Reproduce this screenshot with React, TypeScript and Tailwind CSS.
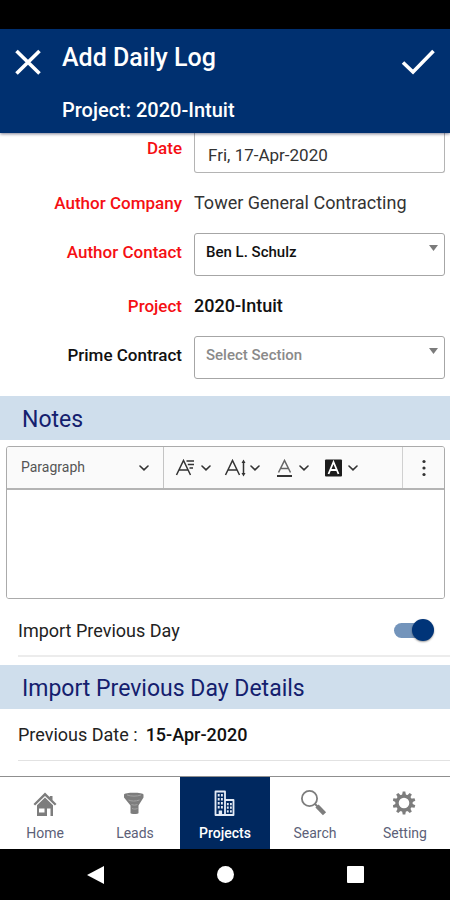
import { useState } from "react";
import type { ReactNode } from "react";

const FIELD =
    "block h-[43px] w-full appearance-none rounded-[3px] border border-[#a6a6a6] bg-white pl-[11px] pr-8 pb-1 text-[15px] outline-none";

function Row({
    label,
    htmlFor,
    required,
    labelClass = "",
    children,
}: {
    label: string;
    htmlFor?: string;
    required?: boolean;
    labelClass?: string;
    children: ReactNode;
}) {
    const color = required ? "text-[#f50f14]" : "text-[#111]";
    return (
        <div className="grid grid-cols-[182px_1fr] items-center gap-3 pr-[5px]">
            <label
                htmlFor={htmlFor}
                className={`text-right text-[17px] leading-7 font-medium ${color} ${labelClass}`}
            >
                {label}
            </label>
            {children}
        </div>
    );
}

function SelectBox({
    id,
    className,
    options,
}: {
    id: string;
    className: string;
    options: string[];
}) {
    return (
        <div className="relative">
            <select id={id} className={`${FIELD} ${className}`}>
                {options.map((o) => (
                    <option key={o}>{o}</option>
                ))}
            </select>
            <svg
                className="pointer-events-none absolute right-[7px] top-3 h-[6px] w-[9px]"
                viewBox="0 0 9 6"
            >
                <path d="M0 0h9L4.500 6z" fill="#7b7b7b" />
            </svg>
        </div>
    );
}

function SectionTitle({ children }: { children: ReactNode }) {
    return (
        <h2 className="flex h-11 items-center bg-[#cfdeec] pt-1 pl-[22px] text-[23px] text-[#14206e]">
            {children}
        </h2>
    );
}

function Chevron() {
    return (
        <svg width="10" height="6" viewBox="0 0 10 6" fill="none">
            <path
                d="M1 1l4 3.800L9 1"
                stroke="#333"
                strokeWidth="1.600"
                strokeLinecap="round"
            />
        </svg>
    );
}

const LETTER_A = "M1.500 17L8.500 2.500L15.500 17M4.200 12H12.800";

function ToolButton({ label, children }: { label: string; children: ReactNode }) {
    return (
        <button aria-label={label} className="flex items-center gap-[3px]">
            <svg
                width="23"
                height="20"
                viewBox="0 0 23 20"
                fill="none"
                stroke="#333"
                strokeWidth="1.500"
            >
                {children}
            </svg>
            <Chevron />
        </button>
    );
}

function Editor() {
    return (
        <div className="mt-[6px] mr-[5px] ml-[6px] overflow-hidden rounded-[3px] border border-[#ababab]">
            <div className="flex h-[43px] items-stretch border-b-2 border-[#b4b4b4] bg-[#fafafa]">
                <button className="flex w-[157px] items-center justify-between border-r border-[#c4c4c4] pl-[14px] pr-[14px] text-[14px] text-[#555]">
                    Paragraph
                    <Chevron />
                </button>
                <div className="flex flex-1 items-center gap-[13px] pl-[11px]">
                    <ToolButton label="Font family">
                        <path d={LETTER_A} />
                        <path d="M11.500 3H19M12.800 6.500H19M14.500 10H18" />
                    </ToolButton>
                    <ToolButton label="Font size">
                        <path d={LETTER_A} />
                        <path d="M19.500 4V16" />
                        <path
                            d="M19.500 1.500l2 3.500h-4zM19.500 18.500l2-3.500h-4z"
                            fill="#333"
                            stroke="none"
                        />
                    </ToolButton>
                    <ToolButton label="Text color">
                        <path
                            d="M5.500 14.500L11.500 2.500L17.500 14.500M7.700 10.500H15.300"
                            stroke="#666"
                        />
                        <path d="M4 18H19" strokeWidth="2" />
                    </ToolButton>
                    <ToolButton label="Background color">
                        <rect
                            x="3"
                            y="1.500"
                            width="17"
                            height="17"
                            rx="1"
                            fill="#1c1c1c"
                            stroke="none"
                        />
                        <path
                            d="M6.500 16L11.500 4L16.500 16M8.200 12H14.800"
                            stroke="#fff"
                            strokeWidth="1.800"
                        />
                    </ToolButton>
                </div>
                <button
                    aria-label="More"
                    className="flex w-[42px] items-center justify-center border-l border-[#d0d0d0]"
                >
                    <svg width="4" height="18" viewBox="0 0 4 18" fill="#333">
                        <circle cx="2" cy="2.500" r="1.600" />
                        <circle cx="2" cy="9" r="1.600" />
                        <circle cx="2" cy="15.500" r="1.600" />
                    </svg>
                </button>
            </div>
            <textarea
                aria-label="Notes"
                className="block h-[108px] w-full resize-none bg-white p-3 outline-none"
            />
        </div>
    );
}

function HomeIcon() {
    return (
        <svg width="24" height="28" viewBox="0 0 24 28" fill="#7d7d7d">
            <path d="M12 2.500L.5 14l1.600 1.600L12 6l9.900 9.600 1.600-1.600-4-4V6h-2.700v1.300z" />
            <path
                d="M12 7.500L4 15.300V26h16V15.300zM6 18.500h5.500v4H6zM14 18.500h3.500V26H14z"
                fillRule="evenodd"
            />
        </svg>
    );
}

function LeadsIcon() {
    return (
        <svg width="24" height="28" viewBox="0 0 24 28">
            <path
                d="M1 4.500C1 2 20.500 2 20.500 4.500V7.500L15.500 15.500V23c0 1.400-8 1.400-8 0V15.500L1 7.500z"
                fill="#7d7d7d"
            />
            <path
                d="M4 5c4 1.500 10 1.500 14 0M5.500 10c3 1.400 7 1.400 11 0M8.500 14.500c2 .8 4 .8 6 0M9 18.500c2 .8 3.500 .8 5.500 0"
                fill="none"
                stroke="#a3a3a3"
                strokeWidth="1"
            />
        </svg>
    );
}

function ProjectsIcon() {
    return (
        <svg width="24" height="28" viewBox="0 0 24 28" fill="none">
            <path
                d="M2.500 25V1.500H12V10H20.500V25zM12 10v15"
                stroke="#e3eaf5"
                strokeWidth="1.800"
                strokeLinejoin="round"
            />
            <path
                d="M5.700 4v15.500M8.900 4v15.500"
                stroke="#e3eaf5"
                strokeWidth="1.900"
                strokeDasharray="2.400 1.600"
            />
            <path
                d="M14.800 13v10.500M17.900 13v10.500"
                stroke="#e3eaf5"
                strokeWidth="1.800"
                strokeDasharray="2.200 1.400"
            />
            <path d="M5.700 20.500h3.400V25H5.700z" fill="#e3eaf5" />
        </svg>
    );
}

function SearchIcon() {
    return (
        <svg width="28" height="28" viewBox="0 0 28 28" fill="none" stroke="#7d7d7d">
            <circle cx="8.500" cy="8.500" r="7.600" strokeWidth="1.800" />
            <path d="M14 14l3 3" strokeWidth="2" />
            <path d="M16 16l7.500 7.800" strokeWidth="4.400" />
        </svg>
    );
}

const TEETH = [0, 36, 72, 108, 144, 180, 216, 252, 288, 324];

function SettingIcon() {
    return (
        <svg width="24" height="28" viewBox="0 0 24 28">
            <circle
                cx="11"
                cy="13"
                r="7"
                fill="none"
                stroke="#7d7d7d"
                strokeWidth="3.400"
            />
            {TEETH.map((a) => (
                <path
                    key={a}
                    d="M9 5.500L9.700 1.500h2.600l.7 4z"
                    fill="#7d7d7d"
                    transform={`rotate(${a} 11 13)`}
                />
            ))}
        </svg>
    );
}

const TABS = [
    { name: "Home", icon: <HomeIcon /> },
    { name: "Leads", icon: <LeadsIcon /> },
    { name: "Projects", icon: <ProjectsIcon /> },
    { name: "Search", icon: <SearchIcon /> },
    { name: "Setting", icon: <SettingIcon /> },
];

function App() {
    const [importDay, setImportDay] = useState(true);
    const [tab, setTab] = useState("Projects");

    return (
        <div className="flex min-h-screen flex-col bg-white font-['Roboto',sans-serif] text-[#222]">
            <div className="h-[29px] bg-black"></div>
            <header className="z-10 flex h-[104px] items-start bg-[#003070] text-white shadow-[0_1px_3px_rgba(0,0,40,0.5)]">
                <button aria-label="Close" className="ml-[14px] mt-5">
                    <svg width="28" height="28" viewBox="0 0 28 28" fill="none">
                        <path
                            d="M2.500 2L25.500 24.500M25.500 2L2.500 24.500"
                            stroke="#fff"
                            strokeWidth="3.600"
                        />
                    </svg>
                </button>
                <div className="ml-5 mt-[13px] flex-1">
                    <h1 className="text-[25px] leading-8 font-medium">
                        Add Daily Log
                    </h1>
                    <p className="mt-5 text-[20px] leading-8 font-medium">
                        Project: 2020-Intuit
                    </p>
                </div>
                <button aria-label="Save" className="mr-[14px] mt-5">
                    <svg width="36" height="28" viewBox="0 0 36 28" fill="none">
                        <path
                            d="M3 13.500L13 23L33.500 2"
                            stroke="#fff"
                            strokeWidth="3.600"
                        />
                    </svg>
                </button>
            </header>

            <main className="flex-1">
                <Row label="Date" htmlFor="date" required labelClass="pb-[10px]">
                    <input
                        id="date"
                        defaultValue="Fri, 17-Apr-2020"
                        className="block h-10 w-full rounded-b-[3px] border border-t-0 border-[#b4b4b4] pt-[5px] pl-[13px] text-[17px] text-[#333] outline-none"
                    />
                </Row>
                <div className="py-4">
                    <Row label="Author Company" required>
                        <span className="text-[18px] leading-7 text-[#333]">
                            Tower General Contracting
                        </span>
                    </Row>
                </div>
                <Row
                    label="Author Contact"
                    htmlFor="contact"
                    required
                    labelClass="pb-[6px]"
                >
                    <SelectBox
                        id="contact"
                        className="font-medium text-[#111]"
                        options={["Ben L. Schulz"]}
                    />
                </Row>
                <div className="py-4">
                    <Row label="Project" required>
                        <span className="text-[18px] leading-7 font-medium text-[#111]">
                            2020-Intuit
                        </span>
                    </Row>
                </div>
                <Row
                    label="Prime Contract"
                    htmlFor="prime"
                    labelClass="pb-[6px]"
                >
                    <SelectBox
                        id="prime"
                        className="font-medium text-[#8a8a8a]"
                        options={["Select Section"]}
                    />
                </Row>

                <div className="mt-[17px]">
                    <SectionTitle>Notes</SectionTitle>
                </div>
                <Editor />

                <label className="ml-[18px] flex h-[58px] items-center justify-between border-b-2 border-[#ececec] pt-[6px] pr-4 text-[18px]">
                    Import Previous Day
                    <span className="relative flex h-[22px] w-10 items-center">
                        <input
                            type="checkbox"
                            role="switch"
                            checked={importDay}
                            onChange={(e) => setImportDay(e.target.checked)}
                            className="peer h-[15px] w-9 appearance-none rounded-full bg-[#b8b8b8] checked:bg-[#7394bb]"
                        />
                        <span className="pointer-events-none absolute left-0 h-[22px] w-[22px] rounded-full bg-[#eee] shadow-[0_1px_2px_rgba(0,0,0,0.4)] peer-checked:left-[18px] peer-checked:bg-[#003478]"></span>
                    </span>
                </label>

                <div className="mt-2">
                    <SectionTitle>Import Previous Day Details</SectionTitle>
                </div>
                <p className="ml-[18px] flex h-[52px] items-center gap-2 border-b border-[#e2e2e2] text-[18px]">
                    Previous Date :{" "}
                    <span className="font-medium text-[#111]">15-Apr-2020</span>
                </p>
            </main>

            <nav className="grid grid-cols-5 border-t border-[#8f8f8f]">
                {TABS.map((t) => (
                    <button
                        key={t.name}
                        onClick={() => setTab(t.name)}
                        className={`flex h-[72px] flex-col items-center gap-[5px] pt-[13px] text-[14px] leading-5 ${
                            tab === t.name
                                ? "bg-[#00285f] font-medium text-white"
                                : "text-[#5c5f78]"
                        }`}
                    >
                        {t.icon}
                        {t.name}
                    </button>
                ))}
            </nav>
            <div className="flex h-[51px] items-center justify-center gap-[113px] bg-black">
                <button aria-label="Back">
                    <svg width="17" height="18" viewBox="0 0 17 18">
                        <path d="M0 9L17 0v18z" fill="#fff" />
                    </svg>
                </button>
                <button
                    aria-label="Home screen"
                    className="h-[17px] w-[17px] rounded-full bg-white"
                ></button>
                <button
                    aria-label="Recent apps"
                    className="h-[17px] w-[17px] rounded-[1px] bg-white"
                ></button>
            </div>
        </div>
    );
}

export default App;
